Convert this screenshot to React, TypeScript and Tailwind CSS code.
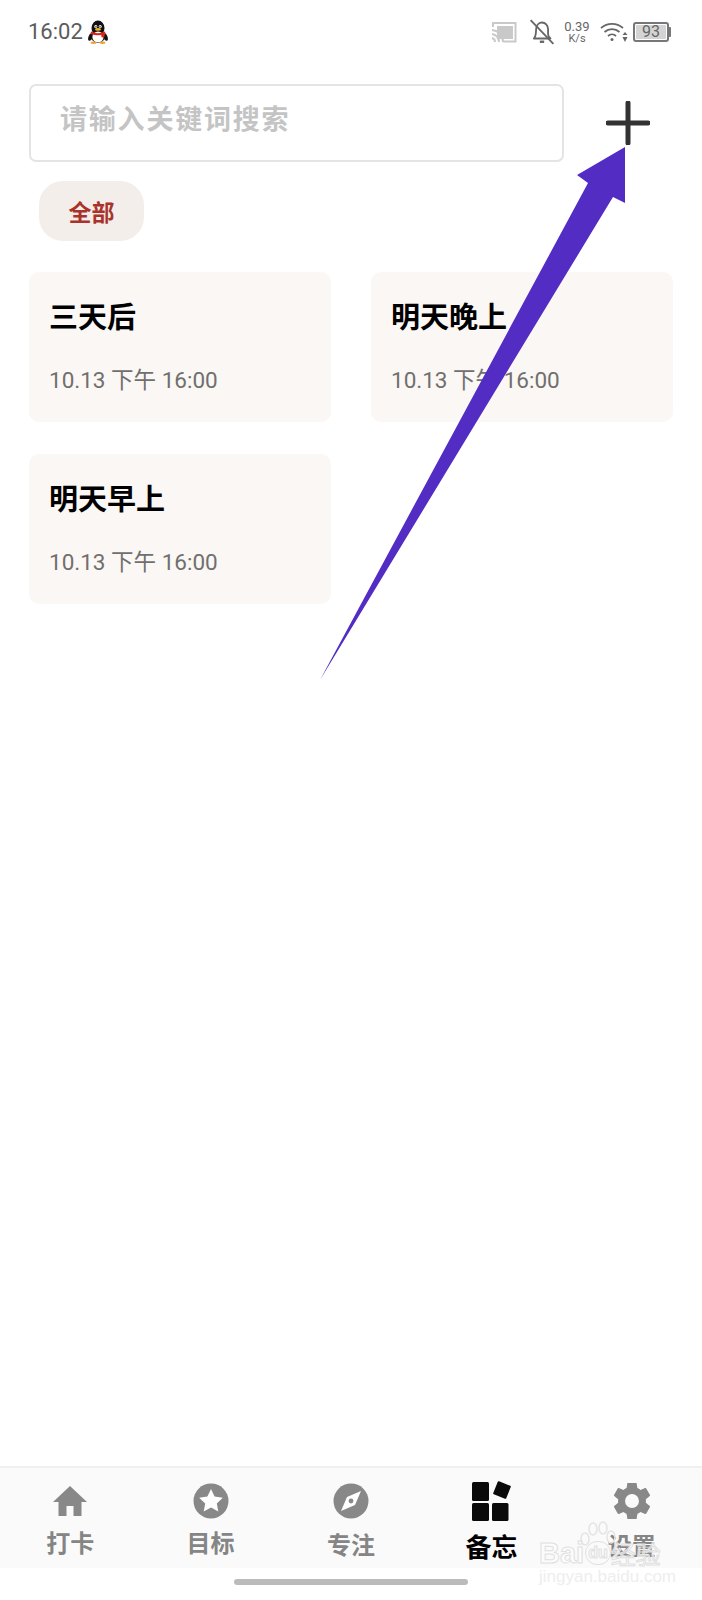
const cjk = "font-['Noto_Sans_CJK_SC',sans-serif]";

const cards = [
  { title: "三天后", time: "10.13 下午 16:00" },
  { title: "明天晚上", time: "10.13 下午 16:00" },
  { title: "明天早上", time: "10.13 下午 16:00" },
];

function Penguin() {
  return (
    <svg width="22" height="24" viewBox="0 0 22 24" className="-ml-[1px]">
      <ellipse cx="11" cy="8" rx="6.5" ry="7.5" fill="#111" />
      <ellipse cx="3.5" cy="17" rx="2" ry="4" fill="#111" transform="rotate(20 3.5 17)" />
      <ellipse cx="18.5" cy="17" rx="2" ry="4" fill="#111" transform="rotate(-20 18.5 17)" />
      <ellipse cx="11" cy="16.5" rx="7" ry="6.5" fill="#111" />
      <ellipse cx="11" cy="17" rx="5.6" ry="5.6" fill="#fff" />
      <circle cx="8.8" cy="6.5" r="1.5" fill="#fff" />
      <circle cx="13.2" cy="6.5" r="1.5" fill="#fff" />
      <circle cx="9" cy="6.7" r="0.7" fill="#111" />
      <circle cx="13" cy="6.7" r="0.7" fill="#111" />
      <ellipse cx="11" cy="9.4" rx="3" ry="1.3" fill="#f2b01e" />
      <path d="M4 11.5 Q11 15 18 11.5 L18.5 14 Q11 16.5 3.5 14 Z" fill="#d8261c" />
      <path d="M14 14 L18 14 L17 18 L14.5 17 Z" fill="#d8261c" />
      <ellipse cx="6.5" cy="22.7" rx="3" ry="1.2" fill="#e9a93a" />
      <ellipse cx="15.5" cy="22.7" rx="3" ry="1.2" fill="#e9a93a" />
    </svg>
  );
}

function StatusIcons() {
  return (
    <div className="flex items-center text-[#666]">
      <svg width="26" height="22" viewBox="0 0 26 22" className="mr-[12px]">
        <path d="M2 6 V2 H24.5 V20.5 H12" fill="none" stroke="#c9c9c9" strokeWidth="2" />
        <rect x="6" y="5" width="16" height="13" fill="#c9c9c9" />
        <path d="M1 9 A12 12 0 0 1 12 21 M1 13 A8 8 0 0 1 8 21 M1 17 A4 4 0 0 1 4 21" fill="none" stroke="#c9c9c9" strokeWidth="2" />
      </svg>
      <svg width="26" height="26" viewBox="0 0 24 24" className="mr-[9px]">
        <path d="M4.5 18 C6.8 15.5 6.3 12 6.6 9 C7 5.2 9.5 3.2 12 3.2 C15 3.2 17.6 5.6 17.6 9.5 L17.6 14 C17.6 15.8 18.6 17 19.8 18 Z" fill="none" stroke="#666" strokeWidth="1.7" strokeLinejoin="round" />
        <path d="M10 21 H14" stroke="#666" strokeWidth="2.2" />
        <path d="M1.5 1 L22.5 23" stroke="#666" strokeWidth="1.7" />
      </svg>
      <div className="mr-[10px] flex w-[26px] flex-col items-center font-['Roboto',sans-serif] leading-none">
        <span className="text-[13px] leading-[13px]">0.39</span>
        <span className="text-[11px] leading-[12px]">K/s</span>
      </div>
      <svg width="28" height="22" viewBox="0 0 28 22" className="mr-[5px]">
        <path d="M1 7 A17 17 0 0 1 23 7 M4.5 11 A11.5 11.5 0 0 1 19.5 11 M8 15 A6 6 0 0 1 16 15" fill="none" stroke="#666" strokeWidth="1.7" />
        <circle cx="12" cy="18.5" r="1.5" fill="#666" />
        <path d="M25 11 L27.5 14 H22.5 Z M25 21 L27.5 16 H22.5 Z" fill="#666" />
      </svg>
      <div className="flex items-center">
        <div className="flex h-[20px] w-[36px] items-center rounded-[3px] border-2 border-[#777] p-[1px]">
          <div className="flex h-full w-full items-center justify-center rounded-[1px] bg-[#d4d4d4] font-['Roboto',sans-serif] text-[16px] leading-none text-[#666]">
            93
          </div>
        </div>
        <div className="h-[10px] w-[2px] rounded-r-[1px] bg-[#777]" />
      </div>
    </div>
  );
}

function HomeIcon() {
  return (
    <svg width="36" height="32" viewBox="0 0 36 32" fill="#888">
      <path d="M18 1 L35 17 H29.5 V31 H21.5 V21 H14.5 V31 H6.5 V17 H1 Z" />
    </svg>
  );
}

function StarIcon() {
  return (
    <svg width="36" height="36" viewBox="0 0 36 36">
      <circle cx="18" cy="18" r="17.5" fill="#888" />
      <path d="M18 6 L21.6 13.6 L29.8 14.7 L23.8 20.4 L25.3 28.6 L18 24.6 L10.7 28.6 L12.2 20.4 L6.2 14.7 L14.4 13.6 Z" fill="#fff" />
    </svg>
  );
}

function CompassIcon() {
  return (
    <svg width="36" height="36" viewBox="0 0 36 36">
      <circle cx="18" cy="18" r="17.5" fill="#888" />
      <path d="M28 8 L22 22 L8 28 L14 14 Z" fill="#fff" />
      <circle cx="18" cy="18" r="2.4" fill="#888" />
    </svg>
  );
}

function GridIcon() {
  return (
    <svg width="40" height="42" viewBox="0 0 40 42" fill="#0a0a0a">
      <rect x="1" y="2" width="17" height="19" rx="1.5" />
      <rect x="1" y="23" width="17" height="18" rx="1.5" />
      <rect x="21" y="23" width="16.5" height="18" rx="1.5" />
      <rect x="24" y="3" width="14" height="14" rx="1" transform="rotate(22 31 10)" />
    </svg>
  );
}

function GearIcon() {
  return (
    <svg width="36" height="36" viewBox="2.7 2.7 18.6 18.6" fill="#888">
      <path d="M19.14 12.94c.04-.31.06-.62.06-.94s-.02-.63-.06-.94l2.03-1.58a.5.5 0 0 0 .12-.64l-1.92-3.32a.5.5 0 0 0-.6-.22l-2.39.96a7 7 0 0 0-1.62-.94l-.36-2.54a.5.5 0 0 0-.5-.42h-3.84a.5.5 0 0 0-.49.42l-.36 2.54a7.4 7.4 0 0 0-1.62.94l-2.39-.96a.5.5 0 0 0-.6.22L2.71 8.84a.5.5 0 0 0 .12.64l2.03 1.58c-.04.31-.07.63-.07.94s.02.63.06.94l-2.03 1.58a.5.5 0 0 0-.12.64l1.92 3.32c.12.22.38.3.6.22l2.39-.96c.5.38 1.04.7 1.62.94l.36 2.54c.05.24.25.42.49.42h3.84c.24 0 .45-.18.49-.42l.36-2.54a7 7 0 0 0 1.62-.94l2.39.96c.22.08.48 0 .6-.22l1.92-3.32a.5.5 0 0 0-.12-.64l-2.03-1.58ZM12 15.6A3.6 3.6 0 1 1 12 8.4a3.6 3.6 0 0 1 0 7.2Z" />
    </svg>
  );
}

const tabs = [
  { label: "打卡", icon: <HomeIcon />, labelClass: "mt-[3px] text-[24px] font-semibold leading-[30px] text-[#858585]" },
  { label: "目标", icon: <StarIcon />, labelClass: "mt-[3px] text-[24px] font-semibold leading-[30px] text-[#858585]" },
  { label: "专注", icon: <CompassIcon />, labelClass: "mt-[5px] text-[24px] font-semibold leading-[30px] text-[#858585]" },
  { label: "备忘", icon: <GridIcon />, labelClass: "mt-[5px] text-[26px] font-bold leading-[34px] text-black" },
  { label: "设置", icon: <GearIcon />, labelClass: "mt-[6px] text-[24px] font-semibold leading-[30px] text-[#858585]" },
];

export default function App() {
  return (
    <div className={`relative flex h-[1600px] w-[702px] flex-col overflow-hidden bg-white ${cjk}`}>
      <div className="flex h-[64px] shrink-0 items-center justify-between pl-[28px] pr-[31px]">
        <div className="flex items-center gap-[5px]">
          <span className="font-['Roboto',sans-serif] text-[22px] leading-none text-[#5c5c5c]">16:02</span>
          <Penguin />
        </div>
        <StatusIcons />
      </div>

      <div className="mt-[20px] flex items-center pl-[29px]">
        <div className="flex h-[78px] w-[535px] items-center rounded-[7px] border-2 border-[#e4e4e4] pb-[12px] pl-[29px]">
          <span className="text-[27px] font-bold leading-none tracking-[1.8px] text-[#c4c4c4]">请输入关键词搜索</span>
        </div>
        <svg width="44" height="44" viewBox="0 0 44 44" className="ml-[42px] -mt-[1px]">
          <path d="M22 2 V42 M2 22 H42" stroke="#333" strokeWidth="5" strokeLinecap="round" />
        </svg>
      </div>

      <div className="ml-[39px] mt-[19px] flex h-[60px] w-[105px] items-center justify-center rounded-[24px] bg-[#f4eeea]">
        <span className="text-[23px] font-bold leading-none text-[#a9332b]">全部</span>
      </div>

      <div className="mt-[31px] grid flex-1 grid-cols-2 content-start gap-x-[40px] gap-y-[32px] px-[29px]">
        {cards.map((card) => (
          <div key={card.title} className="flex h-[150px] flex-col rounded-[10px] bg-[#faf7f5] pl-[20px] pt-[25px]">
            <span className="text-[29px] font-semibold leading-[36px] text-black">{card.title}</span>
            <span className="mt-[32px] font-['Roboto','Noto_Sans_CJK_SC',sans-serif] text-[22.5px] leading-[30px] text-[#716f6d]">
              {card.time}
            </span>
          </div>
        ))}
      </div>

      <div className="grid h-[102px] shrink-0 grid-cols-5 border-t-2 border-[#f0f0f0] bg-[#fafafa]">
        {tabs.map((tab) => (
          <div key={tab.label} className="flex flex-col items-center">
            <div className="flex h-[56px] items-center justify-center pt-[10px]">{tab.icon}</div>
            <span className={tab.labelClass}>{tab.label}</span>
          </div>
        ))}
      </div>

      <div className="flex h-[32px] shrink-0 items-center justify-center pb-[4px]">
        <div className="h-[6px] w-[234px] rounded-full bg-[#bbbbbb]" />
      </div>

      {/* annotation arrow drawn over the screenshot */}
      <svg className="pointer-events-none absolute left-0 top-0" width="702" height="700" viewBox="0 0 702 700">
        <path d="M625 147 L625 203 L613 197 L320 680 L588 183 L577 175 Z" fill="#532cc4" />
      </svg>

      {/* baidu watermark */}
      <div className="pointer-events-none absolute left-[539px] top-[1521px] flex w-[130px] flex-col font-['Liberation_Sans',sans-serif]">
        <svg width="36" height="28" viewBox="0 0 36 28" className="ml-[41px]" fill="none" stroke="#e4e4e4" strokeWidth="1.5">
          <ellipse cx="5" cy="18" rx="4" ry="6" />
          <ellipse cx="13" cy="8" rx="4" ry="6" />
          <ellipse cx="23" cy="7" rx="4" ry="6" />
          <ellipse cx="31" cy="16" rx="4" ry="6" />
        </svg>
        <div className="-mt-[10px] flex items-center text-[#ffffff99] [-webkit-text-stroke:1px_#e0e0e0]">
          <span className="text-[29px] font-bold leading-[28px]">Bai</span>
          <span className="ml-[1px] rounded-[12px] border border-[#e0e0e0] px-[2px] text-[16px] font-bold leading-[22px]">du</span>
          <span className={`text-[25px] leading-[26px] ${cjk}`}>经验</span>
        </div>
        <span className="mt-[1px] text-[17px] leading-[17px] text-[#eeeeee]">jingyan.baidu.com</span>
      </div>
    </div>
  );
}
